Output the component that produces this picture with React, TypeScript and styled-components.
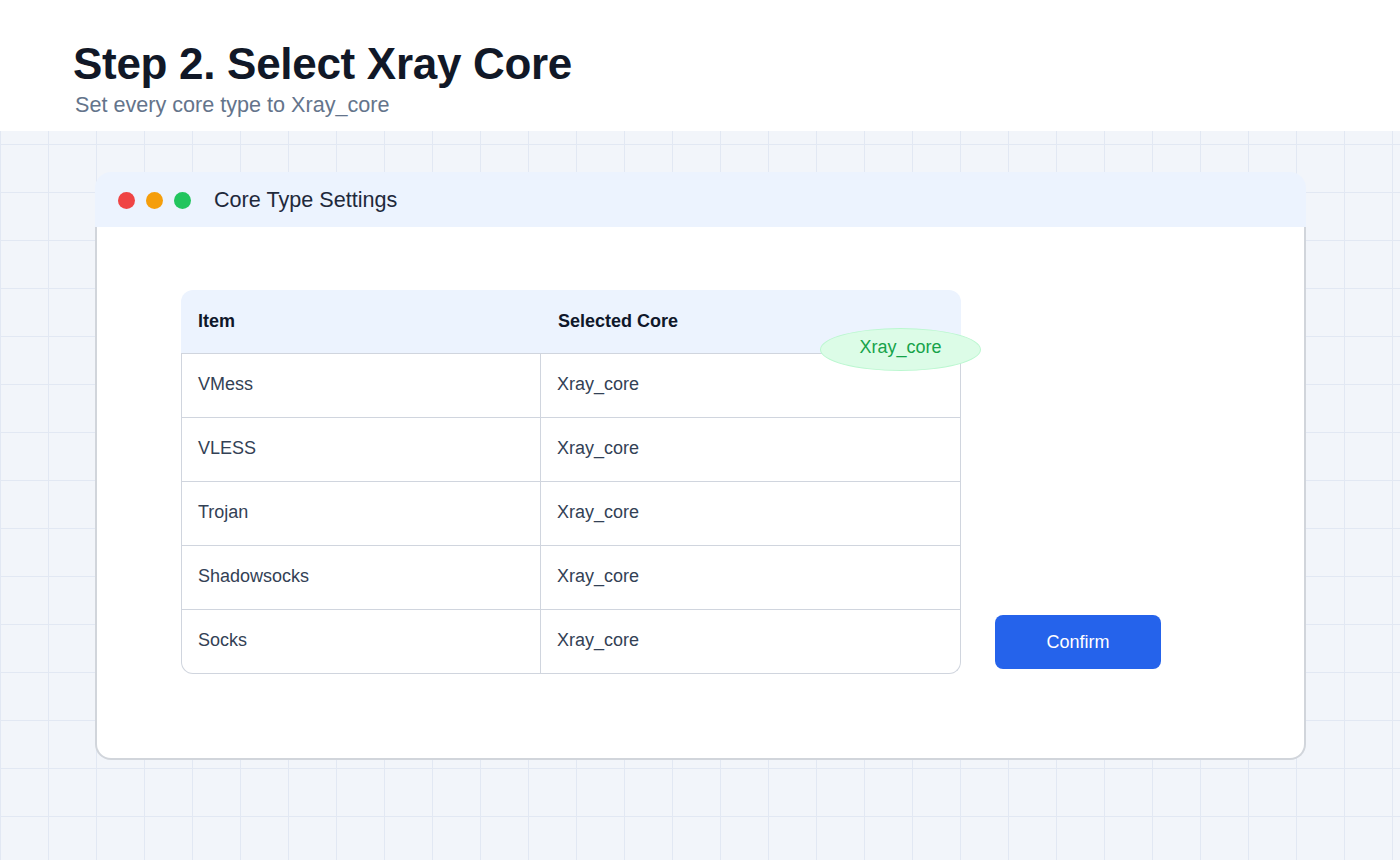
import { FC } from 'react'

import { createGlobalStyle, styled } from 'styled-components'

const rows = ['VMess', 'VLESS', 'Trojan', 'Shadowsocks', 'Socks']

const App: FC = () => {
  return (
    <>
      <GlobalStyle />
      <StyledPage>
        <StyledHeader>
          <StyledTitle>Step 2. Select Xray Core</StyledTitle>
          <StyledSubtitle>Set every core type to Xray_core</StyledSubtitle>
        </StyledHeader>

        <StyledCanvas>
          <StyledWindow>
            <StyledTitleBar>
              <StyledDots>
                <StyledDot color="#ef4444" />
                <StyledDot color="#f59e0b" />
                <StyledDot color="#22c55e" />
              </StyledDots>
              <StyledWindowTitle>Core Type Settings</StyledWindowTitle>
            </StyledTitleBar>

            <StyledWindowBody>
              <StyledTableBox>
                <StyledHeadRow>
                  <StyledHeadCell>Item</StyledHeadCell>
                  <StyledHeadCell>Selected Core</StyledHeadCell>
                </StyledHeadRow>

                <StyledTableBody>
                  {rows.map((name) => (
                    <StyledRow key={name}>
                      <StyledCell $divider>{name}</StyledCell>
                      <StyledCell>Xray_core</StyledCell>
                    </StyledRow>
                  ))}
                </StyledTableBody>

                <StyledBadge>Xray_core</StyledBadge>
              </StyledTableBox>

              <StyledConfirm type="button">Confirm</StyledConfirm>
            </StyledWindowBody>
          </StyledWindow>
        </StyledCanvas>
      </StyledPage>
    </>
  )
}

export default App

const GlobalStyle = createGlobalStyle`
  html, body {
    margin: 0;
    padding: 0;
  }

  body {
    font-family: 'Liberation Sans', Arial, sans-serif;
    background: #f3f6fb;
  }

  * {
    box-sizing: border-box;
  }
`

const StyledPage = styled.div`
  display: flex;
  flex-direction: column;
  min-height: 860px;
`

const StyledHeader = styled.header`
  height: 131px;
  padding: 39px 73px 0;
  background-color: #fff;
`

const StyledTitle = styled.h1`
  margin: 0;
  font-size: 44px;
  font-weight: 700;
  letter-spacing: -0.3px;
  color: #111827;
`

const StyledSubtitle = styled.p`
  margin: 3px 0 0 2px;
  font-size: 21.6px;
  color: #64748b;
`

const StyledCanvas = styled.main`
  flex: 1;
  padding: 41px 94px 0 95px;
  background-color: #f2f5fa;
  background-image:
    linear-gradient(to right, #e2e8f3 1px, transparent 1px),
    linear-gradient(to bottom, #e2e8f3 1px, transparent 1px);
  background-size: 48px 48px;
  background-position: 0 13px;
`

const StyledWindow = styled.section`
  display: flex;
  flex-direction: column;
  width: 1211px;
`

const StyledTitleBar = styled.div`
  display: flex;
  align-items: center;
  gap: 23px;
  height: 55px;
  padding: 1px 0 0 23px;
  border-radius: 16px 16px 0 0;
  background-color: #ecf3fe;
`

const StyledDots = styled.div`
  display: flex;
  gap: 11px;
`

const StyledDot = styled.span<{ color: string }>`
  width: 17px;
  height: 17px;
  border-radius: 50%;
  background-color: ${({ color }) => color};
`

const StyledWindowTitle = styled.span`
  font-size: 21.6px;
  color: #1e293b;
`

const StyledWindowBody = styled.div`
  display: flex;
  align-items: flex-end;
  gap: 34px;
  padding: 63px 0 84px 84px;
  border: 2px solid #d1d5db;
  border-top: none;
  border-radius: 0 0 16px 16px;
  background-color: #fff;
`

const StyledTableBox = styled.div`
  position: relative;
  width: 780px;
`

const StyledHeadRow = styled.div`
  display: grid;
  grid-template-columns: 360px 1fr;
  align-items: center;
  height: 64px;
  padding-bottom: 1px;
  border-bottom: 1px solid #d0d5de;
  border-radius: 12px 12px 0 0;
  background-color: #ecf3fe;
`

const StyledHeadCell = styled.div`
  padding-left: 17px;
  font-size: 18px;
  font-weight: 700;
  color: #0f172a;
`

const StyledTableBody = styled.div`
  border: 1.5px solid #d0d5de;
  border-top: none;
  border-radius: 0 0 12px 12px;
`

const StyledRow = styled.div`
  display: grid;
  grid-template-columns: 359px 1fr;
  height: 64px;
  border-bottom: 1px solid #d0d5de;

  &:last-child {
    height: 63px;
    border-bottom: none;
  }
`

const StyledCell = styled.div<{ $divider?: boolean }>`
  display: flex;
  align-items: center;
  padding: 0 0 2px 16px;
  font-size: 18px;
  color: #334155;
  border-right: ${({ $divider }) => ($divider ? '1px solid #d0d5de' : 'none')};
`

const StyledBadge = styled.span`
  position: absolute;
  top: 38px;
  left: 639px;
  display: flex;
  align-items: center;
  justify-content: center;
  width: 161px;
  height: 43px;
  padding-bottom: 4px;
  border: 1px solid #bbf7d0;
  border-radius: 50%;
  font-size: 18px;
  color: #16a34a;
  background-color: #dcfce7;
`

const StyledConfirm = styled.button`
  width: 166px;
  height: 54px;
  margin-bottom: 5px;
  border: none;
  border-radius: 8px;
  font-family: inherit;
  font-size: 18px;
  color: #fff;
  background-color: #2563eb;
  cursor: pointer;
`
